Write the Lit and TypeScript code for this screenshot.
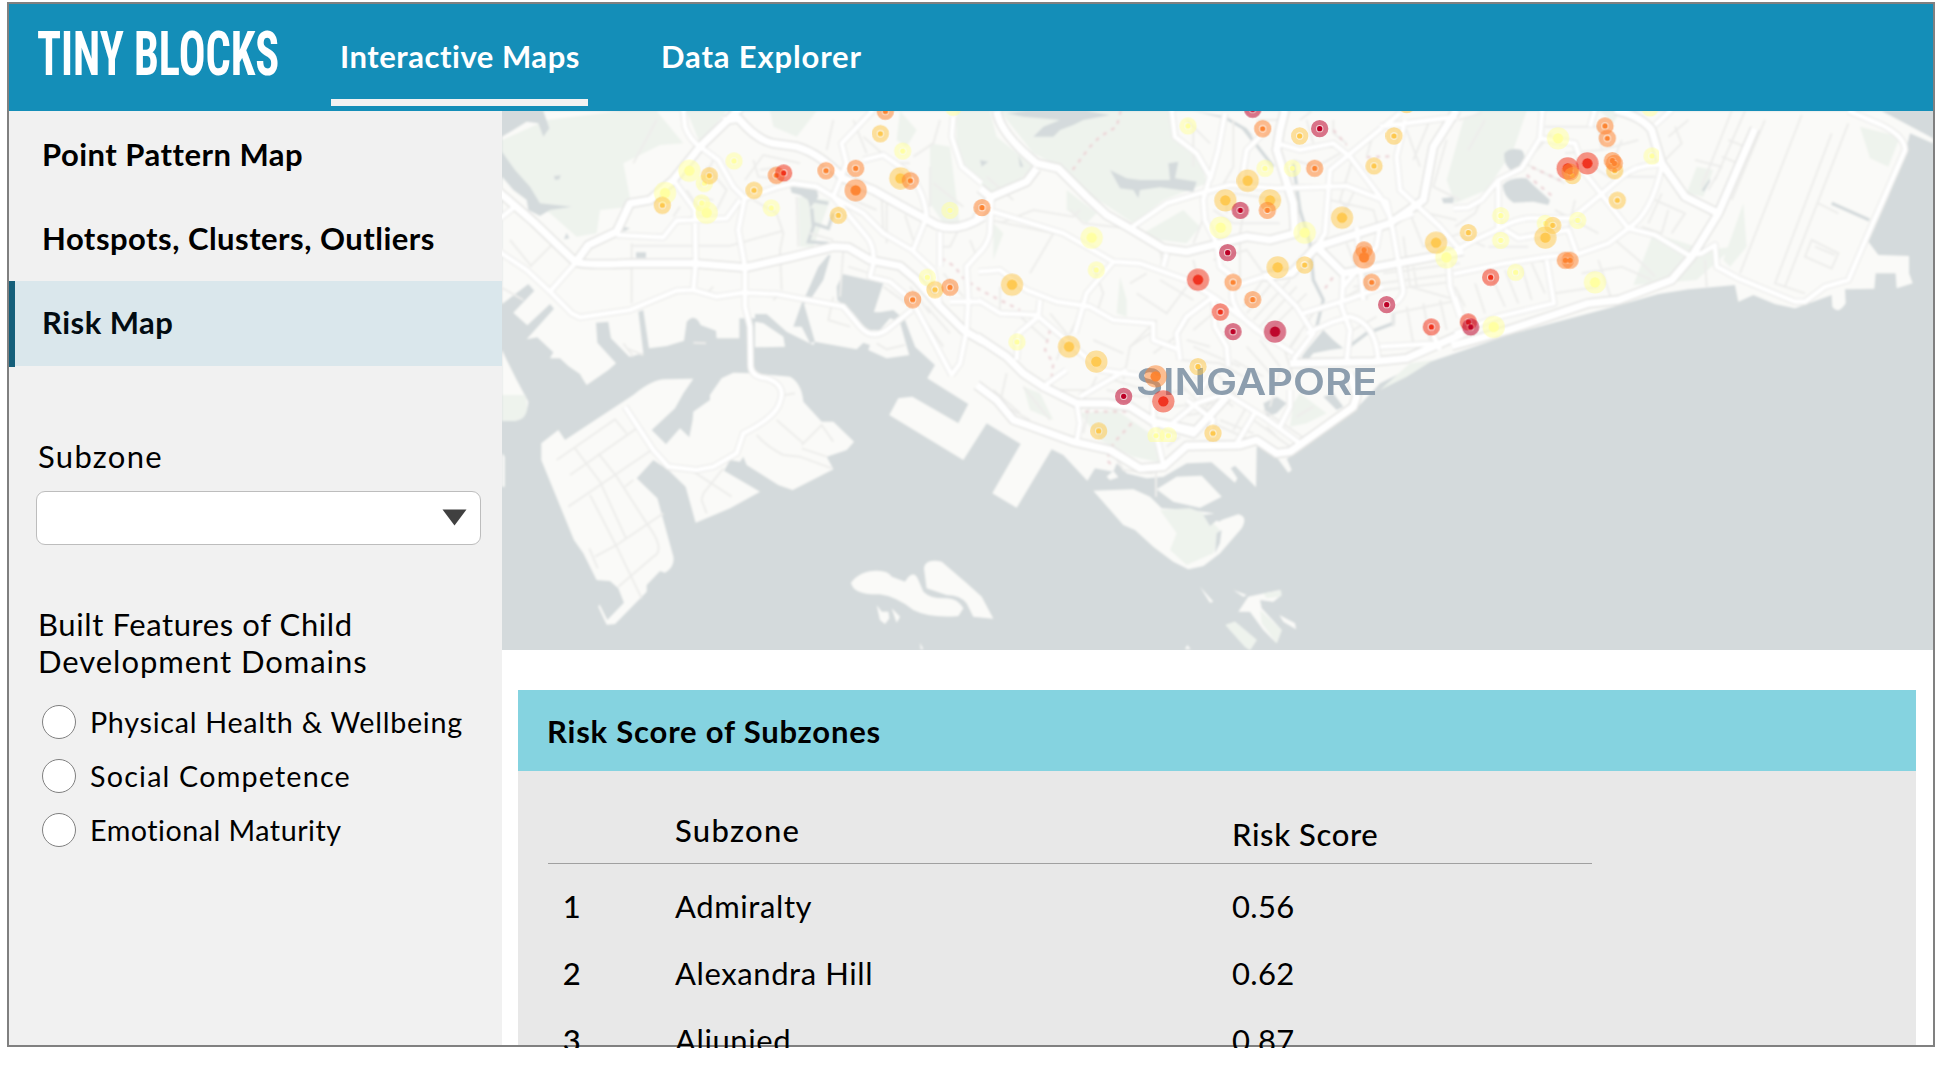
import { LitElement, html, svg, css } from "lit";
import { customElement, property } from "lit/decorators.js";

type Marker = [number, number, string, boolean?];

const PALETTE: Record<string, string> = {
  y: "#ffffa0",
  a: "#fec84e",
  o: "#fd8430",
  r: "#f0301a",
  d: "#bd0026",
};

// Map units are a third of a pixel. Each sheet of roads has its own origin.
const SHEETS = [
  {
    x: 0,
    y: 0,
    minor:
      "M0 560L70 600M15 340L45 320M90 500L160 430M30 420L95 500M395 430L395 610M395 437L690 437L850 392M760 300L830 340L850 400L840 450L845 570M620 200L680 270L650 330M735 240L790 165L900 190M760 180L775 230L860 240M400 190L470 60M640 300L590 290M600 330L560 270M890 290L895 440M930 400L1000 420M1145 290L1150 400M1160 300L1160 430M1215 345L1240 420M1060 60L1100 160M1090 110L1180 190L1230 190M1240 170L1300 130L1320 60M1290 200L1290 320M1300 250L1390 320M1380 380L1350 440L1320 440M1410 420L1430 470M1030 450L1020 590M1045 500L1110 520M1000 590L985 660L1050 680M1130 730L1160 748L1215 735M1150 560L1220 610M1260 640L1330 740M1280 620L1350 700M1230 560L1290 640M1330 520L1390 590M640 560L620 580M820 600L840 580M370 730L400 770M380 745L430 765M580 728L618 730M540 320L520 350M640 180L600 260M780 210L840 200M1000 60L980 150M1060 300L1130 330",
    mid: "M150 575L225 490M520 240L585 330L587 490L580 570M350 405L490 412L530 362L680 355L720 300M-10 450L80 510L150 575L215 640L240 652L390 630L450 605L530 572L580 570L650 590L730 578L830 582L1030 620L1080 680Q1115 720 1160 690L1235 630M550 30L555 80Q570 120 600 140L655 180L700 260L735 295L830 262L880 250L950 260L1000 290L1090 340L1150 400L1235 450L1300 510L1320 620M1120 30L1025 130L1040 190L1000 290L1100 410Q1125 440 1120 490L1110 530L1170 545L1235 600L1310 740L1355 825M1090 180L1150 165L1200 200Q1270 250 1280 350L1240 450M1360 50L1355 110L1385 200L1445 250M1320 395L1320 500M1445 450L1400 500L1405 600L1400 690L1380 790L1355 825M1350 605L1445 605M0 355L45 320",
    major:
      "M-10 270L100 365L225 485Q235 497 400 490L580 490L735 503L880 470L1000 440L1045 442L1110 480L1200 498L1250 540L1320 620L1390 690L1450 725M720 25L600 140L520 240L450 300L390 310L350 395L265 435L225 490M670 62L715 55Q770 120 820 130L890 140Q960 160 1030 235L1120 270L1200 315L1310 375Q1370 400 1450 350",
  },
  {
    x: 0,
    y: 0,
    minor:
      "M170 1080L345 958L380 1000M210 1125L410 985M205 1220L455 1050M225 1045L300 1145L378 1315M295 1060L350 1130L440 1270Q500 1350 460 1370L355 1460M270 1185L350 1340L425 1495M285 1370L350 1335L490 1240M268 1345L293 1405M375 1160L400 1140M580 1115L695 1190M670 1105L610 1180L605 1200L620 1240M770 1005Q800 1040 850 1065L900 1070L995 1105M830 960L910 1030M905 1035L965 975L1000 1025M905 1045L980 1070M855 885L885 880",
    mid: "",
    major: "",
  },
  {
    x: 1440,
    y: 0,
    minor:
      "M20 230L100 300M60 370L160 330L280 350L300 330M30 360L220 400L150 520M270 330L310 370L440 385M340 500L370 580L350 640M540 450L550 500M470 580L560 640L620 560M450 550L500 520M640 480L660 560M700 480L800 450L850 520M780 430L780 540M640 90L640 200M620 60L690 130M760 60L760 200L720 270M830 60L900 60M760 280L900 300M700 330L760 370L900 370M740 290L740 340M790 340L780 400M940 180L1010 200L1080 160M980 60L1000 130M1060 60L1060 100L1100 130M1120 170L1080 300L1110 340M1050 300L1180 330L1200 400M960 60L1000 30M1130 260L1090 340M1280 90L1320 200M1300 330L1430 360M1290 340L1330 440L1440 400M1270 410L1290 560L1430 600M1100 430L1150 560L1100 590M1160 430L1160 600M1210 520L1440 490M1120 560L1440 520M1130 580L1420 545M1300 500L1310 560M800 640L900 520M820 660L930 540M840 680L950 560M870 690L980 580M790 620L880 500M930 740L1000 640M920 760L960 700M600 700L650 620M620 720L690 740M450 740L530 660M430 840L450 740L510 700M340 720L430 760M210 640L260 700L230 780M60 560L60 640M300 640L260 720M110 640L200 720M600 780L720 790L790 830M640 740L780 800M760 780L850 830M800 740L880 830M840 720L900 800M910 740L940 830M520 760L600 700M1120 690L1190 650M1240 680L1240 640L1440 600M1280 620L1300 730M1330 610L1350 720M1380 600L1400 690M680 330L640 430M540 540L640 600M700 640L640 690M1180 100L1160 170M1350 60L1300 180M1400 120L1360 260L1440 300",
    mid: "M35 290L30 400Q20 440 -5 460M40 335L250 400L400 485L480 490L620 540L700 590L810 670L870 720M450 385L560 310L660 280L750 255L890 265L1100 258L1220 305L1240 400L1270 570Q1270 600 1220 625M575 30L585 110L650 160L690 230L670 300L675 360L710 430L720 500L760 530M735 40L715 150L690 240M860 90L800 150L785 240M890 130L960 150L1060 130L1110 170L1200 290L1240 370M1430 50L1200 80M1260 40L1050 210L1035 400L1010 440M1275 60L1250 170L1260 270L1380 380L1440 450M1090 520L1085 620L1110 690L1100 785M-5 600L60 640L170 645L270 730L360 810L500 830M-5 515L60 510L140 570L230 605L330 620L400 660L520 670L520 720L600 750M400 485L320 580L285 700M180 600L175 650L115 700L110 780M560 460L550 500M850 530L760 560Q740 620 830 690L940 760M860 530L950 620L1000 700L940 780M970 640L1100 600L1210 560M980 700L1060 665L1110 650Q1190 670 1195 785M1200 740L1380 730L1440 700M700 590L705 680L740 740L745 800M700 590L620 650L590 700L600 780M1090 560L1190 440L1200 380L1300 340M1130 380L1150 600M1340 660L1380 750M1405 480L1410 560L1440 650",
    major:
      "M50 33Q60 100 170 190L235 205L320 290L380 345L450 385L550 445L620 455L700 435L800 410L870 420L945 400L940 310L890 150L900 90L915 30M-10 355L35 290L140 245L170 205M1430 30L1360 140L1330 300L1230 370L1010 440L935 520L850 530M1450 453L1250 490L1090 520L1010 440M0 265L30 290M930 790L1180 785L1280 775L1450 700M-10 710L80 770L130 820L190 860L290 910L380 910L450 920L520 965L570 975L640 990",
  },
  {
    x: 1440,
    y: 810,
    minor:
      "M80 10L60 100L150 150M40 60L120 130M130 50L210 150M230 60L330 60L350 20M330 100L310 190M380 60L480 80L620 60M400 30L500 60L530 130M560 110L700 100M590 140L660 130L720 70M600 40L690 130M640 20L760 110M700 0L800 110L760 180M720 150L820 190M700 160L810 210M820 150L930 230M850 120L980 210M860 170L900 210M950 140L1000 110M400 250L430 300L520 310M300 220L420 260M528 295L528 380M900 0L870 110M600 200L560 230",
    mid: "M290 100L300 160L290 215M300 80L440 0M570 165L650 100L740 70M700 0L650 80M720 60L850 140L960 220M930 60L930 110L900 170M520 155L550 285M830 120L770 220M190 50L260 0M520 100L520 160M620 90L700 150L690 180",
    major:
      "M-10 45L50 90L100 150L280 215L390 240L480 295L550 290L620 228L780 225L830 210L890 250L930 245L1120 110L1130 80L1110 10M520 155L640 190L740 80",
  },
  {
    x: 2865,
    y: 0,
    minor:
      "M10 60L80 40M40 150L90 60M0 380L60 340L80 300M30 620L0 560M60 550L90 640M110 530L150 620M150 510L190 610M200 500L230 600M230 490L270 580M300 580L430 560M380 520L500 500L590 540M480 420L550 480L600 530M430 480L470 600M210 190L330 250M200 200L290 100M270 80L430 80L440 150L550 120M330 160L440 150M380 180L460 230L600 230M480 170L500 120M600 300L690 340L650 400M620 280L580 370M640 330L620 400L560 380M660 80L680 130L630 180M700 60L640 110M720 180L800 200L760 270M750 480L755 560M830 33L740 260M870 33L780 240M930 60L830 300M1040 45L855 520M1130 100L960 550L1050 580M1180 70L990 560M1090 310L1150 340M1070 420L1150 460L1130 505L1050 470ZM1080 440L1140 465M820 120L870 140M800 170L850 190M300 330L430 400M100 440L220 440M20 410L90 440M360 300L340 390",
    mid: "M-5 455L60 420L135 385Q190 350 250 355L350 355L430 290L500 230Q550 190 620 195M-5 325L40 322L80 300L130 240L200 205L255 115L262 30M-5 522L150 490L280 470L360 465L460 430L520 385Q590 340 620 200M255 115L360 130L390 220L520 385L600 405L700 465L740 460L780 435L785 500L850 535L1020 605L1050 605L1110 560L1180 540L1240 400L1350 150Q1350 110 1280 75L1180 33M0 590L20 650M275 480L297 610L130 650L0 700M150 390L190 415L340 390L365 460M130 240L130 385M650 30L600 75M420 30L405 80",
    major:
      "M-10 738L160 690L400 610L490 600L650 540L710 470L790 340L900 85M480 30Q560 50 590 90L620 190L690 290L790 340",
  },
  {
    x: 0,
    y: 0,
    minor: "",
    mid: "M735 290L715 390L735 500L735 620L750 680L752 800Q755 830 800 835Q860 855 840 905Q830 950 730 1000L710 1060L640 1100L590 1110L505 1100L460 1050L375 920",
    major: "",
  },
];

const LAND = [
  // Main island
  "M6 33V612L85 552L103 572L40 638L82 676L150 612L162 626L80 718L112 712L160 757L150 775L180 775L205 798L240 822L247 835L260 855L325 810L348 790L292 728L288 668L325 665L333 715L388 770L430 760L415 635L430 630L447 745L500 738L552 722L560 665Q585 638 602 675L648 692L650 715L718 715V655H765V742L855 740L850 710L790 670L765 665V642H800L860 695L940 735L945 725L1070 748L1090 728L1110 735L1105 750L1160 775L1228 765L1200 665L1212 660L1245 740L1305 795L1282 835L1405 912L1375 970L1237 890L1195 895L1168 945L1390 1080L1460 970L1562 1032L1477 1180L1550 1223L1655 1048L1690 1065L1762 1142L1785 1105L1840 1115L1850 1090L1880 1120L1940 1135L1990 1130L2060 1090L2135 1087L2205 1148L2212 1135L2192 1105L2205 1097L2268 1162L2270 1040L2285 1035L2335 1078L2365 1118L2375 1110L2360 1076L2385 1062L2570 925L2640 850L2720 810L2790 785L2865 760L3025 705L3155 670L3335 622L3475 582L3565 568L3705 555L3715 605L3760 585L3825 612L3885 625L3995 585L3997 620Q4015 645 4037 610L4035 568L4123 566L4127 520L4187 520L4190 565L4238 550L4227 520L4227 468L4135 465L4105 425L4165 290L4215 160L4230 100L4299 130V115L4145 33Z",
  "M6 750L20 780L50 840L85 905Q80 962 40 962H6Z",
  "M6 1060L14 1070V1160H6Z",
  // Western islands
  "M124 1030L175 990L195 1020L400 885Q460 835 500 838L580 836L550 880L525 925L455 990L498 1033L540 985L568 1012L578 960L580 935L630 900V885L665 835L700 818L750 820L870 830Q905 850 910 905L965 965L1000 965L1062 1025L1040 1050L980 1070L1000 1108L878 1170L835 1155L740 1095L730 1070L720 1085L690 1080L672 1112L780 1175L690 1225L587 1268L557 1160L505 1110L460 1080L410 1135L472 1195L520 1370Q525 1400 495 1418L480 1413L440 1455V1475L345 1572L320 1574L295 1520L298 1513L322 1560L372 1508L355 1465L330 1443L290 1440L250 1360L222 1320L124 1080Z",
  // Southern islands
  "M1053 1448Q1080 1412 1130 1412Q1165 1412 1175 1430L1215 1445Q1240 1405 1255 1440L1270 1475Q1290 1495 1330 1495Q1370 1490 1390 1525L1375 1548Q1290 1555 1240 1530Q1190 1490 1140 1483Q1060 1485 1053 1448Z",
  "M1272 1405Q1275 1375 1325 1385L1400 1450L1445 1490L1480 1556L1420 1550L1400 1510Q1380 1485 1340 1485L1280 1465Z",
  "M1780 1172L1900 1168L1950 1190L1985 1225L2070 1230L2140 1240Q2150 1275 2165 1260L2215 1243Q2245 1250 2225 1285L2160 1360L2110 1398L2065 1408L2020 1385L1960 1340L1905 1290L1870 1275Z",
  "M1970 1168L2030 1130L2105 1127L2165 1190L2100 1223L2020 1205Z",
  "M1820 1130L1840 1112L1855 1132L1830 1140Z",
  "M2100 1460L2140 1505L2130 1508ZM2200 1470L2240 1485L2230 1490ZM2215 1535L2245 1490L2340 1470L2345 1485L2320 1505L2280 1500L2285 1525L2345 1590L2330 1630L2290 1590L2250 1535ZM2338 1545L2385 1570L2388 1588L2350 1565Z",
  "M2177 1575L2205 1565L2270 1620L2250 1650L2235 1640Z",
  "M1130 1515L1145 1535L1165 1535L1168 1555L1155 1572L1140 1560ZM1175 1525L1200 1550L1190 1568ZM1260 1628L1270 1648H1262ZM2055 1648L2062 1635L2072 1648Z",
];

const GREENS = [
  "M6 120L140 60L360 33H470L550 130L480 135L370 190L395 320L300 330L290 400L230 410L150 340L80 300L6 160Z",
  "M560 33H680L600 130Z",
  "M810 33H950L890 110L820 80Z",
  "M895 290L990 300L940 440L900 440Z",
  "M1440 33H1370V190L1430 240L1480 290L1560 240L1600 200L1490 110L1470 33Z",
  "M1200 33L1250 90L1220 140L1190 120ZM1290 130L1350 140L1380 380L1330 370L1290 310Z",
  "M1500 33H2010L2030 120L2100 180L2120 250L1990 300L1900 370L1780 290L1700 210L1600 160Z",
  "M1700 270L1790 340L1760 370L1700 330ZM1930 400L2050 330L2100 380L2060 430L1980 420Z",
  "M1860 530L1880 600L1880 650L1850 640ZM1480 370L1510 400L1480 480Z",
  "M2840 240L2890 60L2940 33H3080L3040 150L2960 270L2865 310Z",
  "M3460 400L3620 450L3700 440L3590 540L3400 555ZM3590 200L3640 210L3610 290L3560 280ZM3730 310L3740 440L3690 500L3670 480ZM4080 80L4200 110L4165 200L4110 175Z",
  "M3300 33L3340 70L3360 33Z",
  "M2640 870L2730 790L2800 780L2720 830ZM2380 910L2400 880L2480 940L2420 970L2370 980Z",
  "M1740 940L1850 930L1950 1000L1990 1090L1900 1070L1800 1020ZM1570 860L1620 880L1660 960L1590 930Z",
  "M6 885H76Q95 962 40 962H6Z",
  "M1980 1230L2070 1225L2110 1240L2160 1290L2140 1360L2060 1395L2010 1350L2030 1300Z",
  "M2177 1575L2205 1565L2270 1620L2250 1650L2235 1640ZM2280 1530L2345 1590L2330 1630L2285 1570ZM2290 1480L2345 1472L2340 1490L2300 1495Z",
];

const WATER = [
  "M6 33H130L148 85L130 110L115 70L80 65L40 90L6 110Z",
  "M6 155L45 210L90 260L120 310L215 320L150 330L120 348L85 330L80 300L40 270L6 230Z",
  "M162 228L182 226L178 238L165 240ZM200 398L208 415L192 418ZM408 457H438V473H408ZM370 380L390 385L370 395Z",
  "M870 260L950 265L955 290L930 325L925 300L900 285L875 278Z",
  "M985 465L992 465L970 540L930 600L912 612L945 725L930 730L905 680L880 680L905 610L920 580L955 500Z",
  "M1028 522L1150 550L1120 640L1180 630L1215 660L1245 740L1228 765L1200 665L1170 655L1140 690L1100 690L1060 640L1012 600L1010 560Z",
  "M1520 40L1580 33H1760L1830 45L1750 60L1720 75L1680 90L1660 110L1600 110L1630 80L1680 60L1570 50ZM1555 165L1570 200L1560 200Z",
  "M1830 210L1880 235L1920 240L2010 240L2005 190L2035 185L2025 235L2090 245L2080 275L2040 270L1980 262L1920 270L1915 295L1900 270L1860 265Z",
  "M1440 180L1465 185L1445 200Z",
  "M2080 33L2180 50L2240 85L2260 110L2230 90L2170 55Z",
  "M2405 770L2420 750L2470 690L2500 720L2530 745L2490 750L2440 760L2415 790Z",
  "M3013 160Q3030 140 3065 150Q3080 165 3070 190L3040 215Q3010 200 3013 160ZM3008 255Q3030 230 3080 235L3100 255L3150 300L3145 315L3100 305L3040 308Q3010 290 3008 255Z",
  "M4145 33H4299V115L4220 65Z",
  "M2825 295L2862 290L2860 310H2830Z",
  "M2290 910L2330 890L2360 910L2330 940L2300 950ZM2470 890L2500 880L2530 920L2510 930Z",
  "M2110 1245L2150 1240L2152 1260L2130 1278ZM2150 1300L2165 1290L2160 1330L2145 1360Z",
  "M3605 270L3630 235L3630 245L3612 275Z",
];

const CREEKS =
  "M935 325L940 380L925 425L985 430M940 370L985 385L1000 340M925 300L985 310M2230 85L2320 200M2380 190L2400 330L2430 430M2430 430L2440 540L2470 600L2450 680M2540 745L2600 700L2680 670V640M3995 310L4108 360M1140 560L1115 640L1160 645";

const TRAILS =
  "M1862 33L1850 80L1800 110L1770 140L1740 180L1710 220M1325 475L1365 500L1385 530L1440 570L1500 600L1560 630M1650 690L1635 750L1660 790L1655 830M1755 935L1880 935M1895 970L1840 1030L1820 1080L1840 1100M3080 225L3165 295M3070 190L3190 245M2500 90L2540 135M2600 172L2690 168M2475 565L2500 530";

const MARKERS: Marker[] = [
  [1156, 34, "o"], [1141, 101, "a"], [1208, 153, "y"], [702, 183, "y"],
  [613, 250, "y"], [568, 212, "y", true], [628, 227, "a"],
  [495, 279, "y", true], [487, 316, "a"], [605, 309, "y"], [620, 338, "y", true],
  [829, 226, "o"], [851, 219, "r"], [762, 271, "a"], [814, 324, "y"],
  [978, 212, "o"], [1067, 205, "o"], [1067, 271, "o", true],
  [1201, 235, "a", true], [1231, 242, "o"], [1015, 346, "a"],
  [1350, 331, "y"], [1446, 323, "o"], [1282, 532, "y"], [1305, 569, "a"],
  [1350, 562, "o"], [1238, 599, "o"], [1360, 22, "y"],
  [2258, 28, "d"], [2064, 78, "y"], [2288, 86, "o"], [2399, 108, "a"],
  [2459, 86, "d"], [2682, 108, "a"], [2622, 198, "a"], [2720, 14, "a"],
  [2295, 205, "y"], [2377, 205, "y"], [2444, 205, "o"],
  [2243, 242, "a", true], [2176, 301, "a", true], [2221, 331, "d"],
  [2310, 301, "a", true], [2302, 331, "o"], [2162, 383, "y", true],
  [2414, 398, "y", true], [2526, 353, "a", true], [1775, 413, "y", true],
  [1789, 510, "y"], [1536, 554, "a", true], [2183, 458, "d"],
  [2094, 539, "r", true], [2199, 547, "o"], [2333, 502, "a", true],
  [2414, 495, "a"], [2592, 450, "o"], [2592, 472, "o", true],
  [2839, 472, "y", true], [2808, 428, "a", true], [2615, 547, "o"],
  [2258, 599, "o"], [2161, 636, "r"], [2199, 695, "d"],
  [2325, 695, "d", true], [2660, 614, "d"], [2794, 681, "r"],
  [1551, 726, "y"], [1707, 740, "a", true], [1789, 785, "a", true],
  [3315, 78, "o"], [3322, 115, "o"], [3174, 115, "y", true],
  [3203, 205, "r", true], [3262, 190, "r", true], [3217, 227, "a"], [3210, 216, "o"],
  [3344, 212, "a"], [3337, 182, "o"], [3343, 190, "o"],
  [3456, 168, "y"], [3450, 24, "y"], [3352, 301, "a"], [3002, 347, "y"],
  [3136, 370, "y"], [3158, 376, "a"], [3136, 413, "a", true],
  [3233, 361, "y"], [2905, 398, "a"], [3002, 421, "y"],
  [3196, 481, "o"], [3210, 481, "o"], [2972, 532, "r"], [3047, 517, "y"],
  [3285, 547, "y", true], [2905, 666, "r"], [2912, 681, "d"],
  [2981, 681, "y", true],
];

const TOP_MARKERS: Marker[] = [
  [1967, 829, "o", true], [2094, 800, "a"], [1871, 889, "d"],
  [1990, 904, "r", true], [1796, 993, "a"], [1968, 1007, "y"],
  [2005, 1007, "y"], [2139, 1000, "a"],
];

@customElement("risk-map")
class RiskMap extends LitElement {
  static styles = css`
    :host {
      display: block;
      height: 539px;
      overflow: hidden;
    }
    .canvas {
      display: block;
      width: 100%;
      height: 100%;
    }
    .sea { fill: #d4dadc; }
    .land { fill: #fafaf8; }
    .green { fill: #eef3ed; }
    .minor { fill: none; stroke: #ededeb; stroke-width: 6; }
    .creek { fill: none; stroke: #d4dadc; stroke-width: 10; }
    .trail { fill: none; stroke: #ecd3d6; stroke-width: 7; stroke-dasharray: 12 16; }
    .case-mid { fill: none; stroke: #ebebe9; stroke-width: 21; stroke-linejoin: round; }
    .case-major { fill: none; stroke: #e4e4e2; stroke-width: 31; stroke-linejoin: round; }
    .fill-mid { fill: none; stroke: #fff; stroke-width: 14; stroke-linejoin: round; }
    .fill-major { fill: none; stroke: #fff; stroke-width: 22; stroke-linejoin: round; }
    .city {
      font-family: Inter, "Open Sans", sans-serif;
      font-weight: 600;
      font-size: 112px;
      fill: #8d9eae;
    }
  `;

  private marker([x, y, tone, large]: Marker) {
    const color = PALETTE[tone];
    return large
      ? svg`<circle cx=${x} cy=${y} r="33.5" fill=${color} opacity=".52"></circle>
            <circle cx=${x} cy=${y} r="15.5" fill=${color} opacity=".95"></circle>`
      : svg`<circle cx=${x} cy=${y} r="18.5" fill="none" stroke=${color} stroke-width="15" opacity=".54"></circle>
            <circle cx=${x} cy=${y} r="10.5" fill=${color} opacity=".22"></circle>
            <circle cx=${x} cy=${y} r="7.8" fill=${color}></circle>`;
  }

  private sheet(layer: "minor" | "mid" | "major", cls: string) {
    return SHEETS.map(
      (s) => svg`<path class=${cls} transform="translate(${s.x} ${s.y})" d=${s[layer]}></path>`
    );
  }

  render() {
    return html`
      <svg class="canvas" viewBox="6 33 4293 1617" preserveAspectRatio="none">
        <defs>
          <filter id="soft" x="0" y="0" width="100%" height="100%">
            <feGaussianBlur stdDeviation="2.5"></feGaussianBlur>
          </filter>
          <filter id="soft-top" x="0" y="0" width="100%" height="100%">
            <feGaussianBlur stdDeviation="1.6"></feGaussianBlur>
          </filter>
        </defs>
        <rect class="sea" x="-20" y="0" width="4400" height="1700"></rect>
        <g filter="url(#soft)">
          <rect class="sea" x="-20" y="0" width="4400" height="1700"></rect>
          <path class="land" d=${LAND.join("")}></path>
          <path class="green" d=${GREENS.join("")}></path>
          <path class="sea" d=${WATER.join("")}></path>
          <path class="creek" d=${CREEKS}></path>
          ${this.sheet("minor", "minor")}
          <path class="trail" d=${TRAILS}></path>
          ${this.sheet("mid", "case-mid")} ${this.sheet("major", "case-major")}
          ${this.sheet("mid", "fill-mid")} ${this.sheet("major", "fill-major")}
        </g>
        <g filter="url(#soft-top)">
          ${MARKERS.map((m) => this.marker(m))}
          <text class="city" x="1908" y="885" textLength="724" lengthAdjust="spacingAndGlyphs">SINGAPORE</text>
          ${TOP_MARKERS.map((m) => this.marker(m))}
        </g>
      </svg>
    `;
  }
}

@customElement("app-root")
class AppRoot extends LitElement {
  @property({ type: Array }) rows = [
    ["1", "Admiralty", "0.56"],
    ["2", "Alexandra Hill", "0.62"],
    ["3", "Aljunied", "0.87"],
  ];

  static styles = css`
    :host {
      display: block;
      box-sizing: border-box;
      width: 1935px;
      height: 1079px;
      padding: 2px 0 0 7px;
      overflow: hidden;
      background: #fff;
      color: #000;
      font-family: Lato, "Open Sans", sans-serif;
      font-size: 31px;
      line-height: 38px;
      white-space: nowrap;
    }
    * { box-sizing: border-box; }
    .frame {
      width: 1928px;
      height: 1045px;
      border: 2px solid #808080;
      display: grid;
      grid-template-rows: 107px 934px;
      grid-template-columns: 493px 1431px;
    }
    .header {
      grid-column: 1 / 3;
      display: flex;
      background: #148eb8;
      color: #fff;
    }
    .logo {
      width: 322px;
      height: 107px;
      padding-left: 28px;
    }
    .logo-text {
      display: inline-block;
      font-family: "Roboto Condensed", Roboto, sans-serif;
      font-stretch: 75%;
      font-weight: 700;
      font-size: 62px;
      line-height: 100px;
      transform: scaleX(0.716);
      transform-origin: 0 50%;
    }
    .tab {
      height: 102px;
      padding: 33px 0 0 9px;
      font-weight: 700;
      border-bottom: 7px solid transparent;
      letter-spacing: 0.53px;
    }
    .tab.on { width: 257px; border-color: #f2f2f2; }
    .tab.second { margin-left: 64px; letter-spacing: 0.85px; }
    .sidebar { background: #f1f1f1; }
    .nav {
      height: 85px;
      padding: 24px 0 0 33px;
      font-weight: 700;
      letter-spacing: 0.48px;
    }
    .nav.up { padding-top: 22.5px; }
    .nav.on {
      height: 86px;
      padding: 22px 0 0 27px;
      border-left: 6px solid #155f7a;
      background: linear-gradient(#dae7ec 85px, #f1f1f1 85px);
      color: #020c12;
    }
    .label { margin: 70px 0 0 29px; letter-spacing: 1.3px; }
    .select {
      width: 445px;
      height: 54px;
      margin: 16px 0 0 27px;
      padding-right: 13px;
      display: flex;
      justify-content: flex-end;
      border: 1px solid #bdbdbd;
      border-radius: 9px;
      background: #fff;
    }
    .arrow { width: 25px; height: 17px; margin-top: 17px; fill: #404040; }
    .group { margin: 61px 0 0 29px; line-height: 37px; letter-spacing: 0.6px; }
    .group-end { letter-spacing: 0.95px; }
    .radios { margin: 25px 0 0 33px; display: grid; gap: 19.5px; }
    .radio {
      display: flex;
      align-items: center;
      gap: 14px;
      height: 34.5px;
      font-size: 28.7px;
      letter-spacing: 0.73px;
    }
    .radio:nth-child(2) { letter-spacing: 1.2px; }
    .radio:nth-child(3) { letter-spacing: 0.5px; }
    .dot {
      width: 34px;
      height: 34px;
      border: 1px solid #808080;
      border-radius: 50%;
      background: #fff;
    }
    .content { display: flex; flex-direction: column; height: 934px; }
    .card {
      width: 1398px;
      margin: 40px 0 0 16px;
      background: #e8e8e8;
      height: 355px;
    }
    .title {
      height: 81px;
      padding: 22px 0 0 29px;
      background: #85d3e0;
      font-weight: 700;
      letter-spacing: 0.8px;
    }
    .table { margin-left: 30px; }
    .head {
      width: 1044px;
      height: 93px;
      padding-top: 40px;
      display: grid;
      grid-template-columns: 127px 557px 1fr;
      border-bottom: 1px solid #a0a0a0;
      font-weight: 500;
      letter-spacing: 1.3px;
    }
    .head-score { margin-top: 4px; letter-spacing: 0.6px; }
    .body { padding-top: 23px; height: 184px; overflow: hidden; }
    .row {
      display: grid;
      grid-template-columns: 127px 557px 1fr;
      height: 67.2px;
      letter-spacing: 0.6px;
    }
    .score { letter-spacing: 0.3px; }
    .rank { width: 48px; text-align: center; font-weight: 500; }
  `;

  render() {
    return html`
      <div class="frame">
        <header class="header">
          <div class="logo"><span class="logo-text">TINY BLOCKS</span></div>
          <div class="tab on">Interactive Maps</div>
          <div class="tab second">Data Explorer</div>
        </header>
        <aside class="sidebar">
          <div class="nav">Point Pattern Map</div>
          <div class="nav up">Hotspots, Clusters, Outliers</div>
          <div class="nav on">Risk Map</div>
          <div class="label">Subzone</div>
          <div class="select">
            <svg class="arrow" viewBox="0 0 25 17"><path d="M.5 .5H24.5L12.5 16.5Z"></path></svg>
          </div>
          <div class="group">Built Features of Child<br /><span class="group-end">Development Domains</span></div>
          <div class="radios">
            ${["Physical Health & Wellbeing", "Social Competence", "Emotional Maturity"].map(
              (t) => html`<div class="radio"><span class="dot"></span><span>${t}</span></div>`
            )}
          </div>
        </aside>
        <main class="content">
          <risk-map></risk-map>
          <section class="card">
            <div class="title">Risk Score of Subzones</div>
            <div class="table">
              <div class="head">
                <span></span><span>Subzone</span><span class="head-score">Risk Score</span>
              </div>
              <div class="body">
                ${this.rows.map(
                  (r) => html`<div class="row"><span class="rank">${r[0]}</span><span>${r[1]}</span><span class="score">${r[2]}</span></div>`
                )}
              </div>
            </div>
          </section>
        </main>
      </div>
    `;
  }
}
